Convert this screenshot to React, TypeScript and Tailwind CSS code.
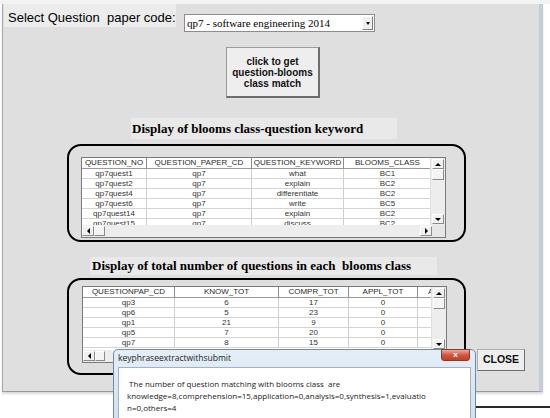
import React from "react";

type Col = { label: string; w: number; clip?: boolean };

const grid1Cols: Col[] = [
    { label: "QUESTION_NO", w: 65 },
    { label: "QUESTION_PAPER_CD", w: 105 },
    { label: "QUESTION_KEYWORD", w: 92 },
    { label: "BLOOMS_CLASS", w: 88 },
];

const grid1Rows = [
    ["qp7quest1", "qp7", "what", "BC1"],
    ["qp7quest2", "qp7", "explain", "BC2"],
    ["qp7quest4", "qp7", "differentiate", "BC2"],
    ["qp7quest6", "qp7", "write", "BC5"],
    ["qp7quest14", "qp7", "explain", "BC2"],
    ["qp7quest15", "qp7", "discuss", "BC2"],
];

const grid2Cols: Col[] = [
    { label: "QUESTIONPAP_CD", w: 92 },
    { label: "KNOW_TOT", w: 104 },
    { label: "COMPR_TOT", w: 70 },
    { label: "APPL_TOT", w: 69 },
    { label: "ANAL_TOT", w: 14, clip: true },
];

const grid2Rows = [
    ["qp3", "6", "17", "0", ""],
    ["qp6", "5", "23", "0", ""],
    ["qp1", "21", "9", "0", ""],
    ["qp5", "7", "20", "0", ""],
    ["qp7", "8", "15", "0", ""],
];

function ArrowBox({ dir }: { dir: "up" | "down" | "left" | "right" }) {
    const tri = {
        up: "border-x-[3px] border-x-transparent border-b-[3px] border-b-black",
        down: "border-x-[3px] border-x-transparent border-t-[3px] border-t-black",
        left: "border-y-[3px] border-y-transparent border-r-[3px] border-r-black",
        right: "border-y-[3px] border-y-transparent border-l-[3px] border-l-black",
    }[dir];
    return (
        <div className="w-[12px] h-[10px] bg-[#f0f0f0] border border-t-white border-l-white border-r-[#8a8a8a] border-b-[#8a8a8a] flex items-center justify-center">
            <div className={`w-0 h-0 ${tri}`} />
        </div>
    );
}

function Grid({ cols, rows, bodyH, thumbW }: { cols: Col[]; rows: string[][]; bodyH: number; thumbW: number }) {
    return (
        <div className="w-[365px] border border-[#7a7a7a] bg-white">
            <div className="flex" style={{ height: bodyH }}>
                <div className="w-[350px] overflow-hidden">
                    <div className="flex h-[11px] border-b border-[#9a9a9a]">
                        {cols.map((c) => (
                            <div
                                key={c.label}
                                style={{ width: c.w }}
                                className={`shrink-0 h-full border-r border-[#8c8c8c] text-[8px] leading-[10px] text-[#2a2a2a] whitespace-nowrap overflow-hidden ${c.clip ? "pl-[10px]" : "text-center"}`}
                            >
                                {c.label}
                            </div>
                        ))}
                    </div>
                    {rows.map((r, i) => (
                        <div key={i} className="flex h-[10px] border-b border-[#d4d4d4]">
                            {r.map((v, j) => (
                                <div
                                    key={j}
                                    style={{ width: cols[j].w }}
                                    className="shrink-0 h-full border-r border-[#cfcfcf] text-center text-[8px] leading-[9px] text-[#333] whitespace-nowrap overflow-hidden"
                                >
                                    {v}
                                </div>
                            ))}
                        </div>
                    ))}
                </div>
                <div className="w-[15px] bg-[#ededed] border-l border-[#e0e0e0] flex flex-col items-center pt-[1px] pb-[1px]">
                    <ArrowBox dir="up" />
                    <div className="w-[12px] h-[11px] bg-[#f4f4f4] border border-t-white border-l-white border-r-[#8a8a8a] border-b-[#8a8a8a]" />
                    <div className="flex-1" />
                    <ArrowBox dir="down" />
                </div>
            </div>
            <div className="flex h-[12px] bg-[#ededed] items-center">
                <ArrowBox dir="left" />
                <div style={{ width: thumbW }} className="h-[10px] bg-[#f4f4f4] border border-t-white border-l-white border-r-[#8a8a8a] border-b-[#8a8a8a]" />
                <div className="flex-1" />
                <ArrowBox dir="right" />
                <div className="w-[13px] h-full bg-[#e6e6e6]" />
            </div>
        </div>
    );
}

export default function App() {
    return (
        <div className="w-[550px] h-[418px] relative overflow-hidden bg-white font-['Liberation_Sans',Arial,sans-serif]">
            <div className="h-[4px] bg-[#f3f3f3]" />
            <div className="ml-[2px] w-[541px] h-[388px] bg-[#dfdfdf] border-l border-[#a9a9a9] border-r-4 border-r-[#c5ccd4] border-b border-b-[#9a9a9a] shadow-[0_2px_2px_rgba(0,0,0,0.15)]">
                {/* question paper selector */}
                <div className="flex items-start">
                    <div className="ml-[1px] w-[172px] h-[23px] bg-[#ececec] pl-[4px] pt-[7px] text-[13px] leading-[13px] text-black whitespace-nowrap">
                        Select Question&nbsp; paper code:
                    </div>
                    <div className="ml-[8px] mt-[10px] w-[191px] h-[18px] bg-white border border-[#8c8c8c] flex items-center">
                        <span className="flex-1 pl-[2px] font-['Liberation_Serif',serif] text-[11px] leading-[12px] text-black whitespace-nowrap">
                            qp7 - software engineering 2014
                        </span>
                        <div className="w-[11px] h-[14px] mr-[1px] bg-[#efefef] border border-t-white border-l-white border-r-[#7d7d7d] border-b-[#7d7d7d] flex items-center justify-center">
                            <div className="w-0 h-0 border-x-[2px] border-x-transparent border-t-[3px] border-t-black" />
                        </div>
                    </div>
                </div>

                <button className="block ml-[223px] mt-[15px] w-[94px] h-[51px] bg-[#eeeeee] border border-t-[#9c9c9c] border-l-[#9c9c9c] border-r-2 border-b-2 border-r-[#6e6e6e] border-b-[#6e6e6e] text-[10px] leading-[11px] font-bold text-[#111] text-center">
                    click to get
                    <br />
                    question-blooms
                    <br />
                    class match
                </button>

                <div className="ml-[128px] mt-[20px] w-[266px] h-[21px] bg-[#e9e9e9] pl-[1px] flex items-center font-['Liberation_Serif',serif] font-bold text-[13px] text-black whitespace-nowrap">
                    Display of blooms class-question keyword
                </div>

                <div className="ml-[64px] mt-[5px] w-[399px] h-[98px] border-2 border-black rounded-[14px] pl-[12px] pt-[11px]">
                    <Grid cols={grid1Cols} rows={grid1Rows} bodyH={67} thumbW={11} />
                </div>

                <div className="ml-[87px] mt-[15px] w-[347px] h-[18px] bg-[#e9e9e9] pl-[2px] flex items-center font-['Liberation_Serif',serif] font-bold text-[13px] text-black whitespace-nowrap">
                    Display of total number of questions in each&nbsp; blooms class
                </div>

                <div className="flex items-start mt-[3px]">
                    <div className="ml-[64px] w-[399px] h-[97px] border-2 border-black rounded-[14px] pl-[13px] pt-[6px]">
                        <Grid cols={grid2Cols} rows={grid2Rows} bodyH={63} thumbW={10} />
                    </div>
                    <button className="ml-[11px] mt-[71px] w-[48px] h-[22px] bg-[#eeeeee] border border-t-[#b0b0b0] border-l-[#b0b0b0] border-r-[#6e6e6e] border-b-[#6e6e6e] text-[10.5px] font-bold text-[#111]">
                        CLOSE
                    </button>
                </div>
            </div>

            {/* window edge behind the message box */}
            <div className="absolute left-[476px] top-[406px] w-[74px] h-[2px] bg-[#2a2a2a]" />

            {/* message box */}
            <div className="absolute left-[113px] top-[349px] w-[363px] h-[80px] rounded-t-[5px] border border-[#6f8aa6] bg-gradient-to-b from-[#e4eef8] to-[#cfdfee] px-[4px]">
                <div className="w-[300px] h-[17px] flex items-center font-['Open_Sans',sans-serif] text-[8.5px] text-[#222]">
                    keyphraseextractwithsubmit
                </div>
                <div className="absolute right-[5px] top-[-1px] w-[29px] h-[12px] rounded-b-[3px] border border-[#8a3a2c] bg-gradient-to-b from-[#e9a99a] via-[#d4543f] to-[#c0402a] flex items-center justify-center text-white text-[8px] font-bold leading-none">
                    x
                </div>
                <div className="h-[70px] bg-white border border-[#9fb2c6] pl-[8px] pt-[10px] font-['Open_Sans',sans-serif] text-[8px] leading-[12px] text-[#1a1a1a] whitespace-nowrap">
                    <div>&nbsp;The number of question matching with blooms class&nbsp; are</div>
                    <div>knowledge=8,comprehension=15,application=0,analysis=0,synthesis=1,evaluatio</div>
                    <div>n=0,others=4</div>
                </div>
            </div>
        </div>
    );
}
